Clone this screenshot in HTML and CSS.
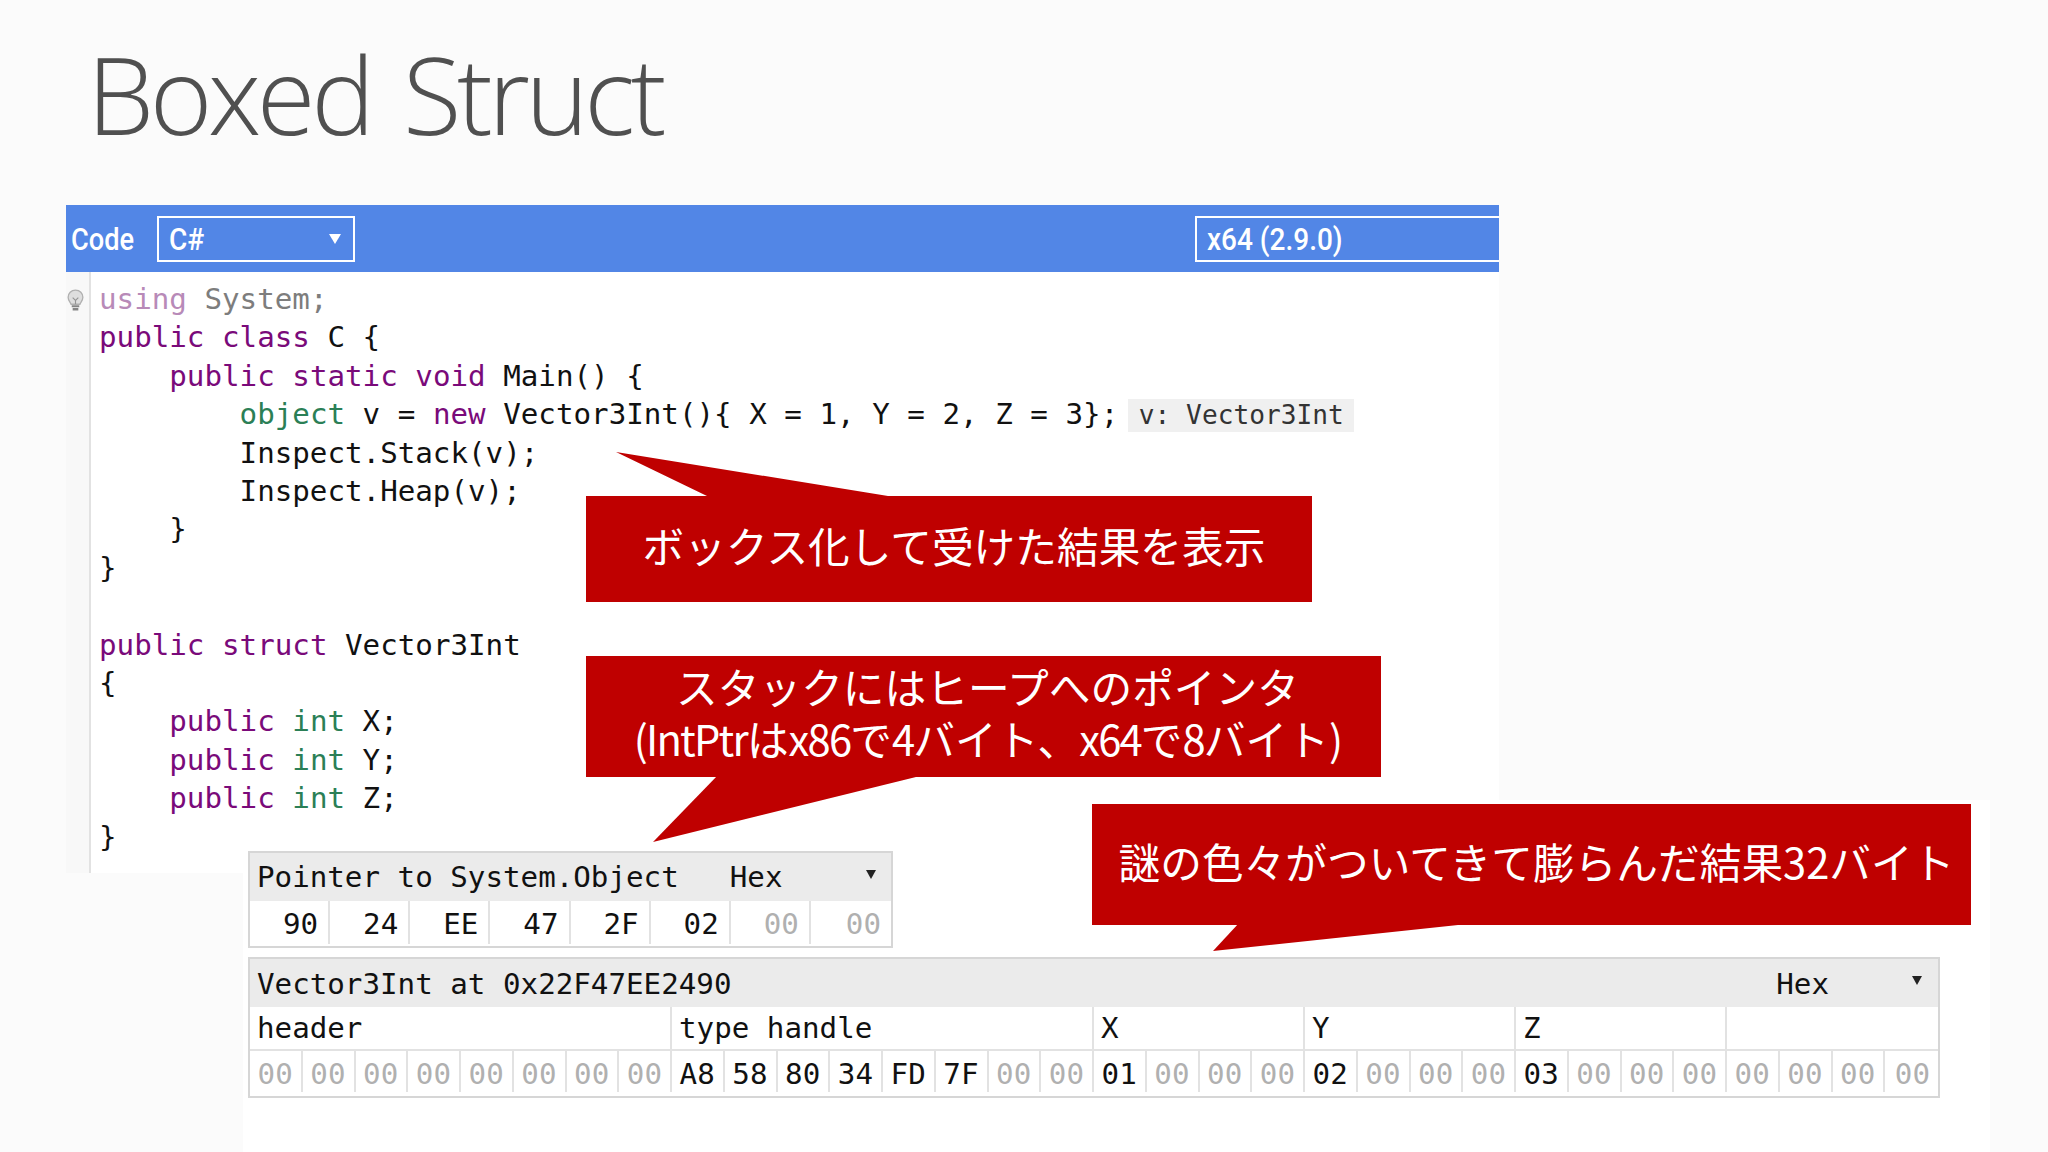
FILE: index.html
```html
<!DOCTYPE html>
<html lang="ja">
<head>
<meta charset="utf-8">
<title>Boxed Struct</title>
<link rel="stylesheet" href="styles.css">
</head>
<body>
<div class="slide">
  <div class="backdrop"></div>
  <h1 class="title">Boxed Struct</h1>
  <section class="lab">
    <header class="toolbar">
      <span class="toolbar-label"><span class="narrow">Code</span></span>
      <div class="select select-lang"><span class="narrow">C#</span><i class="caret"></i></div>
      <div class="select select-ver"><span class="narrow">x64 (2.9.0)</span></div>
    </header>
    <div class="editor">
      <div class="gutter">
        <svg class="bulb" viewBox="0 0 18 24" width="17" height="25"><path d="M9 1C4.400 1 1.200 4.300 1.200 8.600c0 3.200 2.200 4.800 3.100 7.400h9.400c.9-2.600 3.100-4.200 3.100-7.400C16.800 4.300 13.600 1 9 1z" fill="#dedede" stroke="#b0b0b0" stroke-width="1.400"/><path d="M6 9l3 3 3-3M9 12v4" fill="none" stroke="#959595" stroke-width="1.200"/><path d="M5 17h8v2.200H5zM6 20h6v2.500H6z" fill="#858585"/></svg>
      </div>
<pre class="code"><span class="dim-kw">using</span> <span class="dim">System;</span>
<span class="kw">public</span> <span class="kw">class</span> C {
    <span class="kw">public</span> <span class="kw">static</span> <span class="kw">void</span> Main() {
        <span class="ty">object</span> v = <span class="kw">new</span> Vector3Int(){ X = 1, Y = 2, Z = 3}; <span class="hint">v: Vector3Int</span>
        Inspect.Stack(v);
        Inspect.Heap(v);
    }
}

<span class="kw">public</span> <span class="kw">struct</span> Vector3Int
{
    <span class="kw">public</span> <span class="ty">int</span> X;
    <span class="kw">public</span> <span class="ty">int</span> Y;
    <span class="kw">public</span> <span class="ty">int</span> Z;
}</pre>
    </div>
  </section>

  <div class="inspectors">
    <div class="inspect inspect-stack">
      <div class="inspect-head"><span class="inspect-title">Pointer to System.Object</span><span class="inspect-mode">Hex</span><i class="caret caret-dark"></i></div>
      <div class="bytes bytes-8">
        <span>90</span><span>24</span><span>EE</span><span>47</span><span>2F</span><span>02</span><span class="z">00</span><span class="z">00</span>
      </div>
    </div>
    <div class="inspect inspect-heap">
      <div class="inspect-head"><span class="inspect-title">Vector3Int at 0x22F47EE2490</span><span class="inspect-mode">Hex</span><i class="caret caret-dark"></i></div>
      <div class="labels">
        <span class="w8">header</span><span class="w8">type handle</span><span class="w4">X</span><span class="w4">Y</span><span class="w4">Z</span><span class="w4"></span>
      </div>
      <div class="bytes bytes-32">
        <span class="z">00</span><span class="z">00</span><span class="z">00</span><span class="z">00</span><span class="z">00</span><span class="z">00</span><span class="z">00</span><span class="z">00</span>
        <span>A8</span><span>58</span><span>80</span><span>34</span><span>FD</span><span>7F</span><span class="z">00</span><span class="z">00</span>
        <span>01</span><span class="z">00</span><span class="z">00</span><span class="z">00</span>
        <span>02</span><span class="z">00</span><span class="z">00</span><span class="z">00</span>
        <span>03</span><span class="z">00</span><span class="z">00</span><span class="z">00</span>
        <span class="z">00</span><span class="z">00</span><span class="z">00</span><span class="z">00</span>
      </div>
    </div>
  </div>

  <div class="tail tail-1"></div>
  <div class="callout callout-1">ボックス化して受けた結果を表示</div>
  <div class="tail tail-2"></div>
  <div class="callout callout-2">スタックにはヒープへのポインタ<br><span class="latin">(IntPtr</span>は<span class="latin">x86</span>で<span class="latin">4</span>バイト、<span class="latin">x64</span>で<span class="latin">8</span>バイト<span class="latin">)</span></div>
  <div class="tail tail-3"></div>
  <div class="callout callout-3">謎の色々がついてきて膨らんだ結果<span class="latin">32</span>バイト</div>
</div>
</body>
</html>
```
FILE: styles.css
```css
html, body { margin: 0; padding: 0; }
body { background: #fbfbfb; }

.slide {
  position: relative;
  width: 2048px;
  height: 1152px;
  overflow: hidden;
  background: #fbfbfb;
}

.backdrop {
  position: absolute;
  left: 243px;
  top: 800px;
  width: 1747px;
  height: 352px;
  background: #fff;
}

.title {
  position: relative;
  margin: 0;
  height: 205px;
  box-sizing: border-box;
  padding: 21px 0 0 87px;
  font-family: "Open Sans", sans-serif;
  font-weight: 300;
  font-size: 107px;
  line-height: 146px;
  letter-spacing: -4.4px;
  word-spacing: 9px;
  color: #505050;
}

.lab {
  position: relative;
  width: 1433px;
  margin-left: 66px;
  background: #fff;
}

.toolbar {
  display: flex;
  align-items: center;
  height: 67px;
  background: #5286e6;
  color: #fff;
  font-family: Roboto, sans-serif;
  font-weight: 500;
  font-size: 32px;
  overflow: hidden;
}

.narrow {
  display: inline-block;
  transform: scaleX(.875);
  transform-origin: left center;
  white-space: nowrap;
}

.toolbar-label { width: 91px; flex: none; padding-left: 5px; box-sizing: border-box; }
.toolbar-label .narrow { transform: scaleX(.85); }

.select {
  display: flex;
  flex: none;
  align-items: center;
  justify-content: space-between;
  height: 46px;
  box-sizing: border-box;
  border: 2px solid #fff;
  padding: 0 12px 0 10px;
}

.select-lang { width: 198px; }

.select-ver {
  width: 320px;
  margin-left: 840px;
}

.caret {
  width: 0;
  height: 0;
  border-left: 6px solid transparent;
  border-right: 6px solid transparent;
  border-top: 10px solid #fff;
}

.caret-dark { border-left-width: 5px; border-right-width: 5px; border-top: 9px solid #222; }

.editor {
  display: flex;
  height: 601px;
}

.gutter {
  width: 23px;
  flex: none;
  background: #f8f8f8;
  border-right: 2px solid #e2e2e2;
  padding-top: 16px;
}

.bulb { display: block; margin-left: 1px; }

.code {
  margin: 0;
  padding: 8px 0 0 8px;
  font-family: "DejaVu Sans Mono", monospace;
  font-size: 29.2px;
  line-height: 38.4px;
  color: #111;
}

.kw { color: #7a0a7a; }
.ty { color: #2b7f56; }
.dim-kw { color: #b88ab8; }
.dim { color: #7d7d7d; }

.hint {
  display: inline-block;
  font-size: 26.2px;
  line-height: 33px;
  padding: 0 10px 0 11px;
  margin-left: -8px;
  background: #f0f0f0;
  color: #333;
  vertical-align: 0;
}

.inspectors {
  position: absolute;
  left: 248px;
  top: 851px;
  font-family: "DejaVu Sans Mono", monospace;
  font-size: 29.2px;
  color: #111;
}

.inspect {
  box-sizing: border-box;
  border: 2px solid #d6d6d6;
  background: #fff;
}

.inspect-stack { width: 645px; height: 97px; margin-bottom: 9px; }
.inspect-heap { width: 1692px; height: 141px; }

.inspect-head {
  display: flex;
  align-items: center;
  height: 48px;
  padding-left: 7px;
  background: #ebebeb;
  white-space: pre;
  line-height: 48px;
}

.inspect-heap .inspect-title, .inspect-heap .inspect-mode { position: relative; top: 1px; }
.inspect-title { flex: none; }
.inspect-mode { margin-left: auto; }
.inspect-stack .inspect-mode { margin-left: 51px; }
.inspect-stack .caret-dark { margin: -5px 0 0 84px; }
.inspect-heap .caret-dark { margin: -5px 16px 0 83px; }

.labels {
  display: grid;
  grid-template-columns: repeat(32, 1fr);
  height: 44px;
  border-bottom: 2px solid #e2e2e2;
  box-sizing: border-box;
}

.labels span {
  padding-left: 7px;
  line-height: 42px;
  border-right: 2px solid #e2e2e2;
  box-sizing: border-box;
}

.labels span:last-child { border-right: 0; }
.w8 { grid-column: span 8; }
.w4 { grid-column: span 4; }

.bytes {
  display: grid;
  height: 43px;
  line-height: 46px;
}

.bytes-8 { grid-template-columns: repeat(8, 1fr); height: 45px; }
.bytes-32 { grid-template-columns: repeat(32, 1fr); }

.bytes span {
  text-align: right;
  padding-right: 10px;
  border-right: 2px solid #e2e2e2;
  margin-bottom: 2px;
  box-sizing: border-box;
  overflow: hidden;
}

.bytes-32 span { padding-right: 8px; }
.bytes span:last-child { border-right: 0; }
.bytes .z { color: #b0b0b0; }

.callout {
  position: absolute;
  box-sizing: border-box;
  background: #bf0000;
  color: #fff;
  font-family: "Noto Sans CJK JP", sans-serif;
  font-weight: 400;
  font-size: 41.7px;
  text-align: center;
  white-space: nowrap;
}

.latin { letter-spacing: -1.8px; }
.callout-3 .latin { letter-spacing: 0; }

.callout-1 { left: 586px; top: 496px; width: 726px; height: 106px; line-height: 98px; padding-left: 10px; }
.callout-2 { left: 586px; top: 656px; width: 795px; height: 121px; line-height: 52px; padding: 4px 0 0 8px; }
.callout-3 { left: 1092px; top: 804px; width: 879px; height: 121px; line-height: 114px; padding-left: 10px; }

.tail { position: absolute; background: #bf0000; }
.tail-1 { left: 616px; top: 452px; width: 272px; height: 46px; clip-path: polygon(0 0, 272px 44px, 272px 46px, 91px 46px, 91px 44px); }
.tail-2 { left: 653px; top: 775px; width: 263px; height: 67px; clip-path: polygon(65px 0, 263px 2px, 0 67px); }
.tail-3 { left: 1213px; top: 923px; width: 245px; height: 28px; clip-path: polygon(26px 0, 245px 2px, 0 28px); }
```
